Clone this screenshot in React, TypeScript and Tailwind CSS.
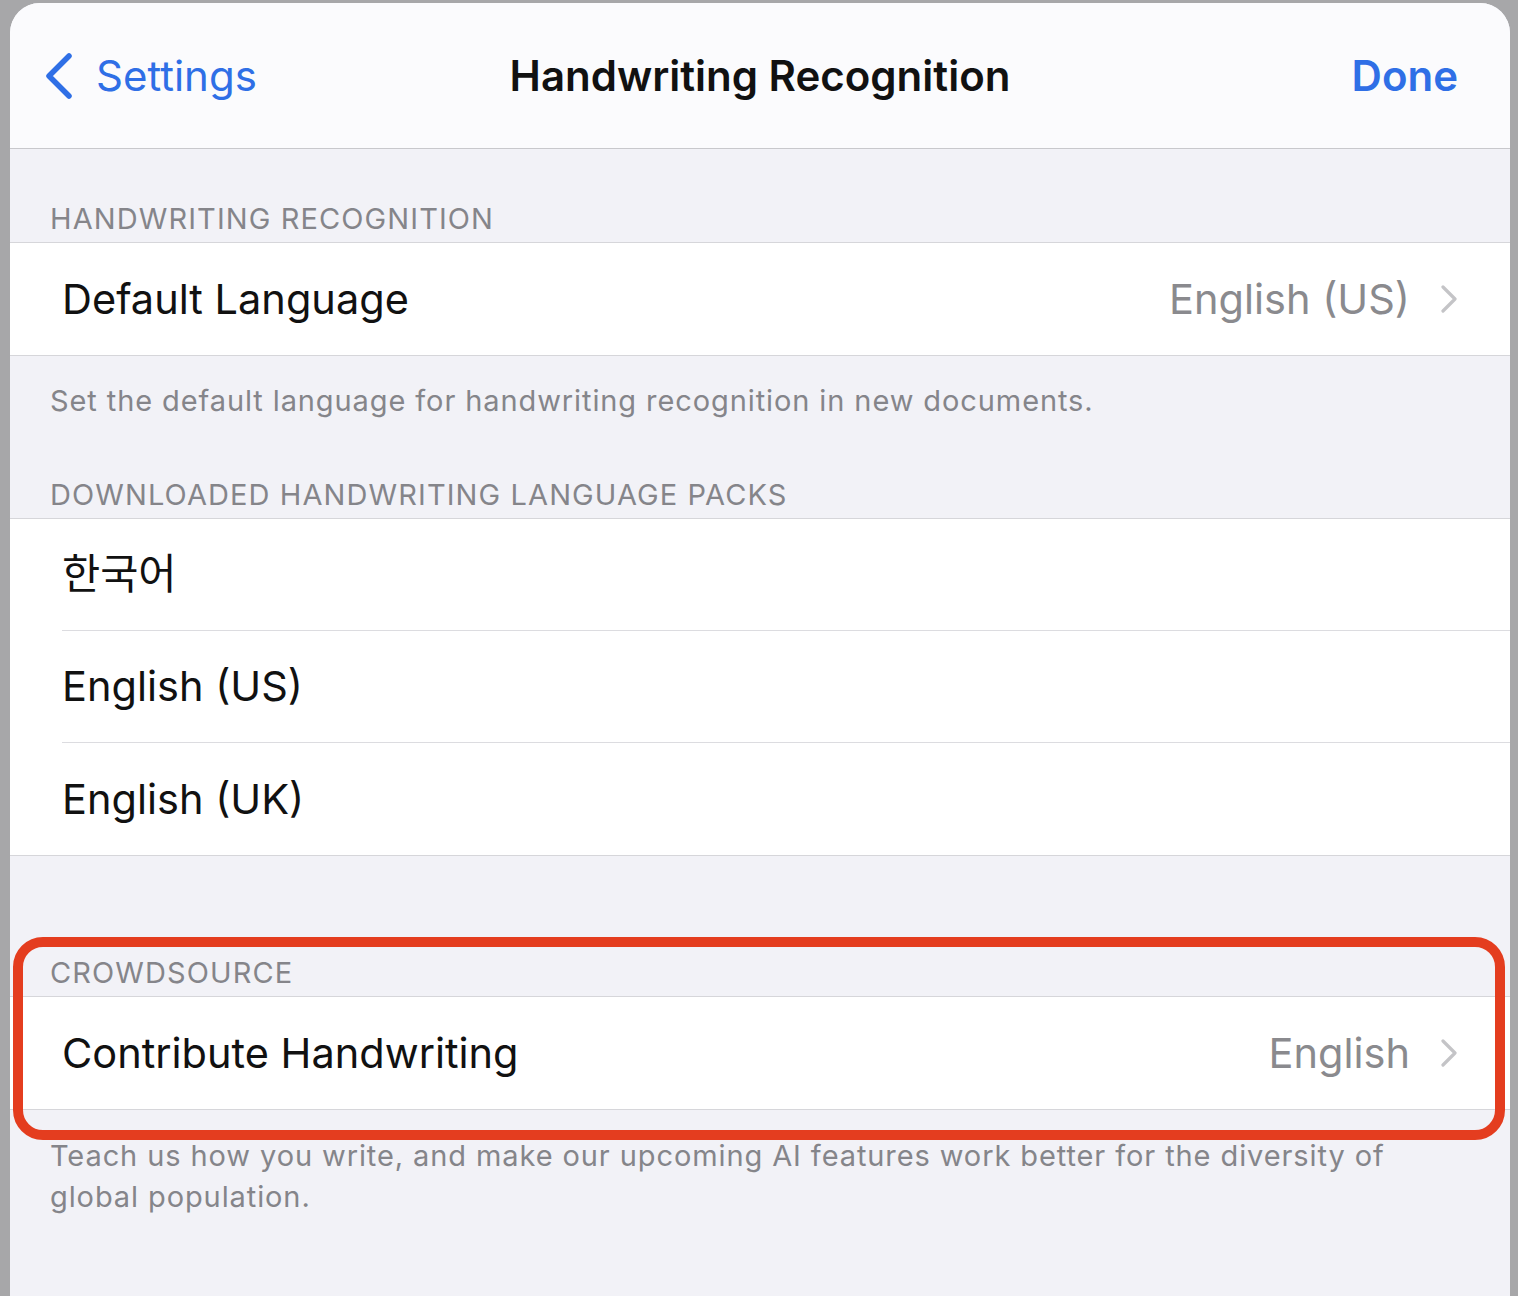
import React from "react";

const font = {
  fontFamily: '"Inter", "Noto Sans CJK KR", "Noto Sans", sans-serif',
};

const Chevron = () => (
  <svg width="18" height="28" viewBox="0 0 18 28" className="ml-[30px]">
    <path
      d="M3 2 L15 14 L3 26"
      fill="none"
      stroke="#c4c4c7"
      strokeWidth="3.2"
      strokeLinecap="round"
      strokeLinejoin="round"
    />
  </svg>
);

const SectionHeader = ({ title, pt }: { title: string; pt: string }) => (
  <div className={`${pt} pb-[5px] pl-[40px]`}>
    <p className="text-[29px] leading-[36px] text-[#85858a] tracking-[1.1px]">
      {title}
    </p>
  </div>
);

const Row = ({
  label,
  value,
  divider,
}: {
  label: string;
  value?: string;
  divider?: boolean;
}) => (
  <div className="pl-[52px] bg-white">
    <div
      className={`h-[112px] flex items-center pr-[52px] ${
        divider ? "border-b border-[#dcdce0]" : ""
      }`}
    >
      <span className="text-[41.5px] text-[#111] flex-1">{label}</span>
      {value && (
        <>
          <span className="text-[41.5px] text-[#8a8a8e]">{value}</span>
          <Chevron />
        </>
      )}
    </div>
  </div>
);

export default function App() {
  return (
    <div
      className="w-[1518px] h-[1296px] bg-[#a7a7a9] pt-[3px] pl-[10px] pr-[8px] overflow-hidden relative"
      style={font}
    >
      <div className="h-full bg-[#f2f2f7] rounded-t-[30px] overflow-hidden">
        {/* nav bar */}
        <div className="h-[146px] bg-[#fbfbfd] border-b border-[#c8c8cc] grid grid-cols-[1fr_auto_1fr] items-center px-[34px]">
          <div className="flex items-center gap-[22px] text-[#2f6fe6]">
            <svg width="30" height="46" viewBox="0 0 30 46">
              <path
                d="M25 3 L5 23 L25 43"
                fill="none"
                stroke="#2f6fe6"
                strokeWidth="5.5"
                strokeLinecap="round"
                strokeLinejoin="round"
              />
            </svg>
            <span className="text-[42px]">Settings</span>
          </div>
          <div className="text-center text-[42px] font-semibold text-[#111]">
            Handwriting Recognition
          </div>
          <div className="flex justify-end pr-[18px]">
            <span className="text-[42px] font-semibold text-[#2f6fe6]">
              Done
            </span>
          </div>
        </div>

        <SectionHeader title="HANDWRITING RECOGNITION" pt="pt-[52px]" />
        <div className="border-y border-[#d6d6da]">
          <Row label="Default Language" value="English (US)" />
        </div>
        <p className="pt-[27px] pl-[40px] text-[29px] leading-[36px] tracking-[0.9px] text-[#85858a]">
          Set the default language for handwriting recognition in new documents.
        </p>

        <SectionHeader
          title="DOWNLOADED HANDWRITING LANGUAGE PACKS"
          pt="pt-[58px]"
        />
        <div className="border-y border-[#d6d6da]">
          <Row label="한국어" divider />
          <Row label="English (US)" divider />
          <Row label="English (UK)" />
        </div>

        <SectionHeader title="CROWDSOURCE" pt="pt-[99px]" />
        <div className="border-y border-[#d6d6da]">
          <Row label="Contribute Handwriting" value="English" />
        </div>
        <p className="pt-[25px] pl-[40px] pr-[100px] text-[29px] leading-[41px] tracking-[0.9px] text-[#85858a]">
          Teach us how you write, and make our upcoming AI features work better
          for the diversity of global population.
        </p>
      </div>

      {/* annotation */}
      <div className="absolute left-[13px] top-[937px] w-[1492px] h-[203px] border-[10px] border-[#e43d1f] rounded-[30px]" />
    </div>
  );
}
